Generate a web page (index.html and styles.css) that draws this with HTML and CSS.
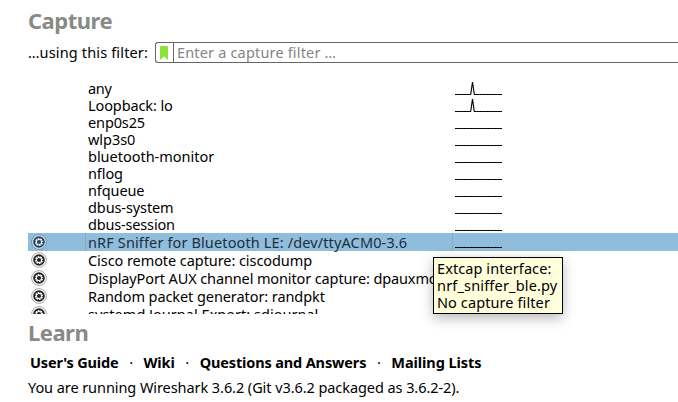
FILE: index.html
```html
<!DOCTYPE html>
<html lang="en">
<head>
<meta charset="utf-8">
<title>Wireshark</title>
<link rel="stylesheet" href="styles.css">
</head>
<body>
<svg class="defs" width="0" height="0" aria-hidden="true">
  <symbol id="gear" viewBox="0 0 16 16">
    <circle cx="8" cy="8" r="7.4" fill="#fff" fill-opacity=".5" stroke="currentColor" stroke-opacity=".5" stroke-width=".8"/>
    <circle cx="8" cy="8" r="4.8" fill="none" stroke="currentColor" stroke-width="2"/>
    <circle cx="8" cy="8" r="3.1" fill="none" stroke="#fff" stroke-opacity=".85" stroke-width="1.5"/>
    <circle cx="8" cy="8" r="3.6" fill="none" stroke="currentColor" stroke-width="1.2" stroke-dasharray="1 1.827"/>
    <circle cx="8" cy="8" r="2.1" fill="currentColor"/>
  </symbol>
  <symbol id="flat" viewBox="0 0 47 17">
    <path d="M0 14.5H47" stroke="#222"/><path d="M0 14.5H47" stroke="#000" stroke-dasharray="2 1"/>
  </symbol>
  <symbol id="peak" viewBox="0 0 47 17">
    <path d="M0 14.5H16M19 14.5H47" stroke="#222"/><path d="M0 14.5H16M19 14.5H47" stroke="#000" stroke-dasharray="2 1"/>
    <path d="M15.7 14.5L17.5 2L19.3 14.5" fill="none" stroke="#000" stroke-width="1.15"/>
  </symbol>
</svg>
<main class="welcome">
  <h1 class="heading capture">Capture</h1>
  <div class="filter">
    <label class="filter-label">…using this filter:</label>
    <div class="filter-box">
      <span class="bookmark"><svg width="8" height="14" viewBox="0 0 8 14"><path d="M0 1Q0 0 1 0H7Q8 0 8 1V14L4 10.5L0 14Z" fill="#8ae234"/></svg></span>
      <span class="placeholder">Enter a capture filter …</span>
    </div>
  </div>
  <div class="interfaces">
    <div class="row"><i></i><span class="t0">any</span><svg class="spark"><use href="#peak"/></svg></div>
    <div class="row"><i></i><span class="t1">Loopback: lo</span><svg class="spark"><use href="#peak"/></svg></div>
    <div class="row"><i></i><span class="t2">enp0s25</span><svg class="spark"><use href="#flat"/></svg></div>
    <div class="row"><i></i><span class="t3">wlp3s0</span><svg class="spark"><use href="#flat"/></svg></div>
    <div class="row"><i></i><span class="t4">bluetooth-monitor</span><svg class="spark"><use href="#flat"/></svg></div>
    <div class="row"><i></i><span class="t5">nflog</span><svg class="spark"><use href="#flat"/></svg></div>
    <div class="row"><i></i><span class="t6">nfqueue</span><svg class="spark"><use href="#flat"/></svg></div>
    <div class="row"><i></i><span class="t7">dbus-system</span><svg class="spark"><use href="#flat"/></svg></div>
    <div class="row"><i></i><span class="t8">dbus-session</span><svg class="spark"><use href="#flat"/></svg></div>
    <div class="row tall selected"><svg class="gear"><use href="#gear"/></svg><span class="t9">nRF Sniffer for Bluetooth LE: /dev/ttyACM0-3.6</span><svg class="spark"><use href="#flat"/></svg></div>
    <div class="row tall"><svg class="gear"><use href="#gear"/></svg><span class="t10">Cisco remote capture: ciscodump</span></div>
    <div class="row tall"><svg class="gear"><use href="#gear"/></svg><span class="t11">DisplayPort AUX channel monitor capture: dpauxmon</span></div>
    <div class="row tall"><svg class="gear"><use href="#gear"/></svg><span class="t12">Random packet generator: randpkt</span></div>
    <div class="row tall"><svg class="gear"><use href="#gear"/></svg><span class="t13">systemd Journal Export: sdjournal</span></div>
  </div>
  <h1 class="heading learn">Learn</h1>
  <nav class="links"><a class="l0">User's Guide</a><b>·</b><a class="l1">Wiki</a><b>·</b><a class="l2">Questions and Answers</a><b>·</b><a class="l3">Mailing Lists</a></nav>
  <p class="version"><span>You are running Wireshark 3.6.2 (Git v3.6.2 packaged as 3.6.2-2).</span></p>
</main>
<div class="tooltip"><span class="p0">Extcap interface:</span><span class="p1">nrf_sniffer_ble.py</span><span class="p2">No capture filter</span></div>
</body>
</html>
```
FILE: styles.css
```css
* { box-sizing: border-box; }
body {
  margin: 0;
  width: 678px;
  height: 402px;
  overflow: hidden;
  background: #fff;
  color: #000;
  font: 14.5px/17px "Noto Sans", sans-serif;
  letter-spacing: -0.3px;
  white-space: nowrap;
}
.defs { position: absolute; }
.welcome { padding-left: 28px; }
.heading { margin: 0; font-size: 22px; font-weight: 700; color: #888a85; letter-spacing: -0.5px; }
.capture { line-height: 26px; padding-top: 7px; height: 42px; }
.filter { display: flex; height: 21px; line-height: 21px; }
.filter-label { width: 127px; letter-spacing: 0.15px; }
.filter-box { flex: 1; display: flex; border: 1px solid #666; border-right: 0; border-radius: 3px 0 0 3px; line-height: 19px; }
.bookmark { width: 18px; display: flex; align-items: center; padding-left: 4px; border-right: 1px solid #666; }
.placeholder { padding-left: 3px; color: #858585; letter-spacing: 0.17px; }
.interfaces { margin-top: 17px; height: 234px; overflow: hidden; }
.row { display: grid; grid-template-columns: 60px 367px 47px; height: 17px; }
.tall { height: 18px; line-height: 18px; }
.row span { justify-self: start; }
.t1 { letter-spacing: -0.1px; }
.t2 { letter-spacing: -0.12px; }
.t3 { letter-spacing: -0.05px; }
.t4 { letter-spacing: -0.02px; }
.t5, .t6, .t7 { letter-spacing: -0.1px; }
.t8 { letter-spacing: -0.17px; }
.t9 { letter-spacing: 0.13px; }
.t10 { letter-spacing: -0.07px; }
.t11 { letter-spacing: -0.12px; }
.t12 { letter-spacing: -0.08px; }
.t13 { letter-spacing: 0.02px; }
.selected { background: linear-gradient(90deg, transparent 57px, #7eabc8 57px, #7eabc8 58px, transparent 58px, transparent 424px, #7eabc8 424px, #7eabc8 425px, transparent 425px), #91bddc; color: #1c2e3c; }
.spark { width: 47px; height: 17px; }
.gear { width: 16px; height: 16px; margin: 1px 0 0 3px; color: #222; }
.selected .gear { color: #24445c; }
.learn { line-height: 26px; padding-top: 5px; height: 39px; }
.links { display: flex; height: 18px; line-height: 18px; padding-left: 2px; font-weight: 700; }
.links b { width: 25px; text-align: center; font-weight: 400; }
.l0 { letter-spacing: -0.17px; }
.l1 { letter-spacing: -0.13px; }
.l2 { letter-spacing: -0.14px; }
.l3 { letter-spacing: -0.07px; }
.version { margin: 8px 0 0; letter-spacing: -0.07px; }
.tooltip {
  position: absolute;
  left: 433px;
  top: 257px;
  width: 130px;
  height: 57px;
  padding: 2px 3px;
  border: 1px solid #000;
  background: #ffffdc;
  box-shadow: 0 4px 12px rgba(0, 0, 0, .28);
  display: flex;
  flex-direction: column;
  align-items: flex-start;
}
.p0 { letter-spacing: 0.08px; }
.p1 { letter-spacing: 0.17px; }
.p2 { letter-spacing: 0.1px; }
```
